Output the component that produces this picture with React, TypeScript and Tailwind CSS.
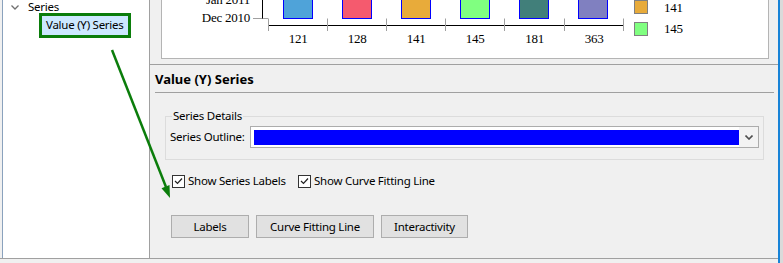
const bars = [
  { x: 283, color: '#4fa3d9', label: '121' },
  { x: 342, color: '#f55a6e', label: '128' },
  { x: 401, color: '#e8ab3a', label: '141' },
  { x: 460, color: '#80ff80', label: '145' },
  { x: 519, color: '#417f7a', label: '181' },
  { x: 578, color: '#8080c0', label: '363' },
]
const ticks = [268, 327, 386, 445, 504, 564, 623]

function Chart() {
  return (
    <svg width="606" height="58" viewBox="162 0 606 58" className="block">
      <g fontFamily="'Liberation Serif', serif" fontSize="13" fill="#000">
        <text x="250" y="4" textAnchor="end">Jan 2011</text>
        <text x="250" y="22" textAnchor="end">Dec 2010</text>
      </g>
      <line x1="253" y1="18.5" x2="268" y2="18.5" stroke="#a0a0a0" />
      <line x1="262.5" y1="0" x2="262.5" y2="18.5" stroke="#000" />
      {bars.map((b) => (
        <rect key={b.x} x={b.x + 0.5} y="-5" width="29" height="23.5" fill={b.color} stroke="#0000ff" />
      ))}
      <line x1="268" y1="25.5" x2="623" y2="25.5" stroke="#000" />
      {ticks.map((t) => (
        <line key={t} x1={t + 0.5} y1="18.5" x2={t + 0.5} y2="31" stroke="#a0a0a0" />
      ))}
      <g fontFamily="'Liberation Serif', serif" fontSize="13" fill="#000" textAnchor="middle">
        {bars.map((b, i) => (
          <text key={b.label} x={(ticks[i] + ticks[i + 1]) / 2 + 0.5} y="43">
            {b.label}
          </text>
        ))}
      </g>
      {/* legend */}
      <rect x="634.5" y="0.5" width="13" height="13" fill="#e8ab3a" stroke="#808080" />
      <rect x="634.5" y="22.5" width="13" height="13" fill="#80ff80" stroke="#808080" />
      <g fontFamily="'Liberation Serif', serif" fontSize="13" fill="#000">
        <text x="664" y="12">141</text>
        <text x="664" y="33">145</text>
      </g>
    </svg>
  )
}

function CheckBox({ label, className = '' }: { label: string; className?: string }) {
  return (
    <div className={`flex items-center gap-[3px] ${className}`}>
      <div className="w-[13px] h-[13px] border border-[#333333] bg-white flex items-center justify-center">
        <svg width="9" height="8" viewBox="0 0 9 8">
          <path d="M1 4 L3.5 6.5 L8 1.5" fill="none" stroke="#222" strokeWidth="1.2" />
        </svg>
      </div>
      <span className="leading-[16px] whitespace-nowrap">{label}</span>
    </div>
  )
}

export default function App() {
  return (
    <div className="relative w-[783px] h-[263px] overflow-hidden bg-[#f0f0f0] font-['Noto_Sans',sans-serif] text-[11.5px] tracking-[-0.25px] text-black flex">
      <div className="w-[778px] flex flex-col">
        <div className="h-[258px] flex">
          <div className="w-[2px]" />
          {/* tree */}
          <div className="w-[148px] bg-white border-l border-l-[#8aa2bd] border-r border-r-[#a0a0a0] overflow-hidden">
            <div className="h-[13px] flex items-center relative">
              <svg width="8" height="5" viewBox="0 0 8 5" className="ml-[8px] mt-[2px]">
                <path d="M0.5 0.5 L4 4 L7.5 0.5" fill="none" stroke="#707070" strokeWidth="1.3" />
              </svg>
              <span className="ml-[9px] leading-[16px]">Series</span>
            </div>
            <div className="ml-[36px] w-[92px] h-[25px] border-[3px] border-[#0b7d0b] bg-[#cce8ff] pl-[4px] leading-[18px] whitespace-nowrap">
              Value (Y) Series
            </div>
          </div>
          {/* right */}
          <div className="flex-1 flex flex-col">
            <div className="h-[64px] pl-[11px]">
              <div className="w-[608px] h-[59px] bg-white border-l border-r border-b border-[#b4b4b4] overflow-hidden">
                <Chart />
              </div>
            </div>
            <div className="flex-1 border-t border-[#a0a0a0] flex flex-col">
              <div className="ml-[5px] mr-[4px] pt-[6px] pb-[5px] leading-[16px] text-[13px] tracking-normal font-bold border-b border-[#a0a0a0]">
                Value (Y) Series
              </div>
              <fieldset className="ml-[15px] mt-[15px] w-[599px] border border-[#dcdcdc] pb-[11px]">
                <legend className="ml-[6px] px-[1px] leading-[16px]">Series Details</legend>
                <div className="mt-[2px] px-[4px] flex items-center">
                  <span className="w-[80px] leading-[16px] whitespace-nowrap">Series Outline:</span>
                  <div className="flex-1 h-[22px] border border-[#acacac] bg-white flex">
                    <div className="flex-1 pl-[3px] pt-[3px] pb-[2px]">
                      <div className="h-[15px] bg-[#0000ff]" />
                    </div>
                    <div className="w-[19px] bg-[#f3f3f3] flex items-center justify-center">
                      <svg width="8" height="5" viewBox="0 0 8 5">
                        <path d="M0.5 0.5 L4 4 L7.5 0.5" fill="none" stroke="#505050" strokeWidth="1.6" />
                      </svg>
                    </div>
                  </div>
                </div>
              </fieldset>
              <div className="ml-[22px] mt-[13px] flex">
                <CheckBox label="Show Series Labels" className="w-[126px]" />
                <CheckBox label="Show Curve Fitting Line" />
              </div>
              <div className="ml-[21px] mt-[26px] flex gap-[7px]">
                <button className="w-[78px] h-[23px] border border-[#adadad] bg-[#e1e1e1]">Labels</button>
                <button className="w-[118px] h-[23px] border border-[#adadad] bg-[#e1e1e1]">Curve Fitting Line</button>
                <button className="w-[87px] h-[23px] border border-[#adadad] bg-[#e1e1e1]">Interactivity</button>
              </div>
            </div>
          </div>
        </div>
        <div className="h-[1px] bg-[#a0a0a0]" />
      </div>
      <div className="w-[2px] bg-[#1883d7]" />
      <div className="flex-1 bg-[#dadada]" />
      {/* annotation arrow */}
      <svg className="absolute left-0 top-0 pointer-events-none" width="783" height="263">
        <line x1="112" y1="50" x2="166" y2="187" stroke="#0b7d0b" strokeWidth="2.5" />
        <polygon points="170,198 169.5,185 161.5,188.3" fill="#0b7d0b" />
      </svg>
    </div>
  )
}
